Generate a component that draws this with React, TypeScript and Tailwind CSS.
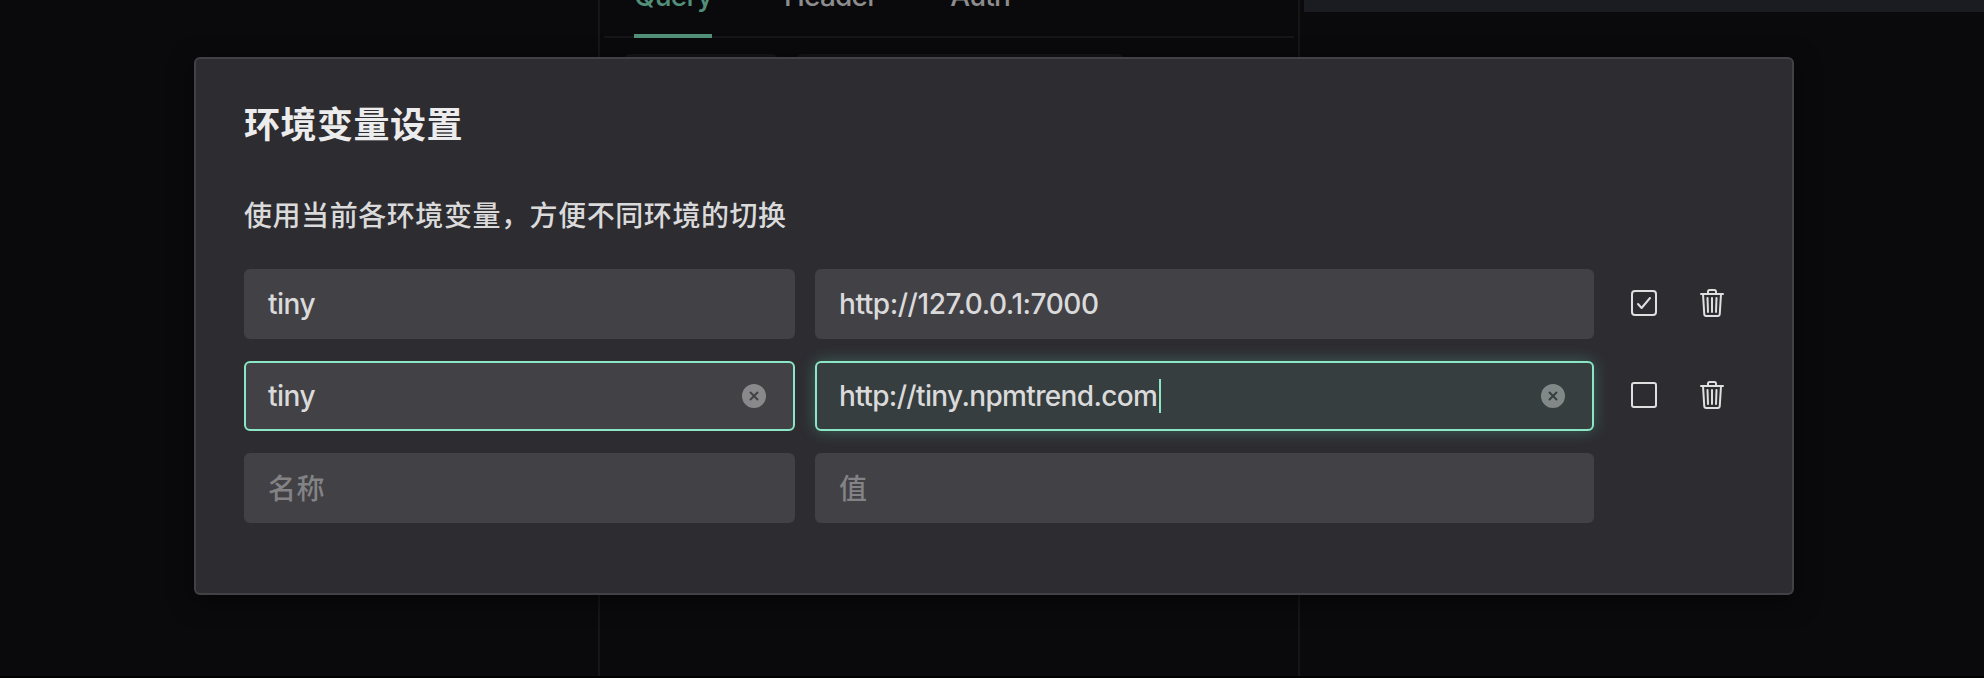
import { clsx } from 'clsx';
import type { ReactNode } from 'react';

type Variable = { name: string; value: string; enabled: boolean; editing?: boolean };

const variables: Variable[] = [
  { name: 'tiny', value: 'http://127.0.0.1:7000', enabled: true },
  { name: 'tiny', value: 'http://tiny.npmtrend.com', enabled: false, editing: true },
];

function ClearIcon() {
  return (
    <svg viewBox="0 0 16 16" className="size-8 shrink-0 fill-white/38">
      <path
        fillRule="evenodd"
        d="M8 2a6 6 0 1 1 0 12A6 6 0 0 1 8 2ZM6.53 5.84a.5.5 0 0 0-.63.06l-.06.07a.5.5 0 0 0 .06.63L7.29 8 5.9 9.4l-.06.07a.5.5 0 0 0 .06.63l.07.06c.2.14.46.12.64-.06L8 8.71l1.4 1.39.07.06c.2.14.46.12.63-.06l.06-.07a.5.5 0 0 0-.06-.63L8.71 8l1.39-1.4.06-.07a.5.5 0 0 0-.06-.63l-.07-.06a.5.5 0 0 0-.63.06L8 7.29 6.6 5.9l-.07-.06Z"
      />
    </svg>
  );
}

function LineIcon({ children }: { children: ReactNode }) {
  return (
    <svg
      viewBox="0 0 512 512"
      className="size-8 shrink-0 stroke-[#dfdfe0]"
      fill="none"
      strokeWidth="32"
      strokeLinecap="round"
      strokeLinejoin="round"
    >
      {children}
    </svg>
  );
}

function CheckIcon({ checked }: { checked: boolean }) {
  return (
    <LineIcon>
      {checked && <path d="M352 176L217.6 336 160 272" />}
      <rect x="64" y="64" width="384" height="384" rx={checked ? 48 : 32} />
    </LineIcon>
  );
}

function TrashIcon() {
  return (
    <LineIcon>
      <path d="M112 112l20 320c.95 18.49 14.4 32 32 32h184c17.67 0 30.87-13.51 32-32l20-320" />
      <path d="M80 112h352" />
      <path d="M192 112V72h0a23.93 23.93 0 0124-24h80a23.93 23.93 0 0124 24v40M256 176v224M184 176l8 224M328 176l-8 224" />
    </LineIcon>
  );
}

type FieldProps = {
  children: string;
  width: string;
  tracking?: string;
  active?: boolean;
  focused?: boolean;
  placeholder?: boolean;
};

function Field({ children, width, tracking = 'tracking-[-0.5px]', active, focused, placeholder }: FieldProps) {
  return (
    <div
      className={clsx(
        'flex h-[70px] items-center rounded-md border-2 pr-[23px] pl-[22px] text-[28px] leading-[34px] font-medium',
        width,
        active ? 'border-[#8ae6c4]' : 'border-transparent',
        focused ? 'bg-[#363e3f] shadow-[0_0_16px_rgba(99,226,183,0.3)]' : 'bg-[#424146]',
        placeholder ? 'pt-px text-[#838385]' : 'text-[#dadadb]',
      )}
    >
      <span className={tracking}>{children}</span>
      {focused && <span className="ml-0.5 h-[34px] w-0.5 bg-[#8ae6c4]" />}
      {active && (
        <span className="ml-auto flex">
          <ClearIcon />
        </span>
      )}
    </div>
  );
}

function RequestPage() {
  return (
    <div className="flex h-[678px] border-b-2 border-black bg-[#0a0a0c]">
      <div className="w-[598px]" />
      <div className="w-[702px] border-x-2 border-[#161618] px-1">
        <div className="flex h-[38px] items-end gap-[72px] border-b-2 border-[#161618] pl-[30px] text-[28px] leading-[34px] font-medium tracking-[-0.8px] text-[#8d8d8e]">
          <div className="-mb-0.5 flex h-[38px] w-[78px] flex-col justify-end border-b-4 border-[#52907a] pb-[21px] text-[#52907a]">
            Query
          </div>
          <div className="pb-[23px]">Header</div>
          <div className="pb-[23px] pl-px">Auth</div>
        </div>
        <div className="flex gap-[18px] pt-4 pl-5">
          <div className="h-[70px] w-[154px] rounded-md bg-[#151517]" />
          <div className="h-[70px] w-[328px] rounded-md bg-[#151517]" />
        </div>
      </div>
      <div className="flex-1 pl-1">
        <div className="h-3 bg-[#1b1c21]" />
      </div>
    </div>
  );
}

function EnvironmentDialog() {
  return (
    <section className="absolute top-[57px] left-[194px] h-[538px] w-[1600px] rounded-md border-2 border-[#414146] bg-[#2d2c31] px-12 pt-[41px] shadow-[0_6px_24px_rgba(0,0,0,0.5)]">
      <h1 className="text-[36px] leading-[50px] font-bold tracking-[0.5px] text-[#ececed]">环境变量设置</h1>
      <p className="mt-[44px] text-[28px] leading-[44px] font-medium tracking-[0.56px] text-[#dadadb]">
        使用当前各环境变量，方便不同环境的切换
      </p>
      <div className="mt-[31px] flex flex-col gap-[22px]">
        {variables.map((item) => (
          <div key={item.value} className="flex items-center">
            <Field width="w-[551px]" active={item.editing}>
              {item.name}
            </Field>
            <div className="ml-5 flex">
              <Field
                width="w-[779px]"
                tracking={item.editing ? 'tracking-[-0.65px]' : 'tracking-[-0.45px]'}
                active={item.editing}
                focused={item.editing}
              >
                {item.value}
              </Field>
            </div>
            <div className="-mt-0.5 ml-[34px] flex gap-9">
              <CheckIcon checked={item.enabled} />
              <TrashIcon />
            </div>
          </div>
        ))}
        <div className="flex gap-5">
          <Field width="w-[551px]" tracking="tracking-[0.4px]" placeholder>
            名称
          </Field>
          <Field width="w-[779px]" tracking="tracking-[0.4px]" placeholder>
            值
          </Field>
        </div>
      </div>
    </section>
  );
}

export default function App() {
  return (
    <main className="relative h-[678px] w-[1984px] overflow-hidden font-['Inter','Noto_Sans_CJK_SC',sans-serif]">
      <RequestPage />
      <EnvironmentDialog />
    </main>
  );
}
